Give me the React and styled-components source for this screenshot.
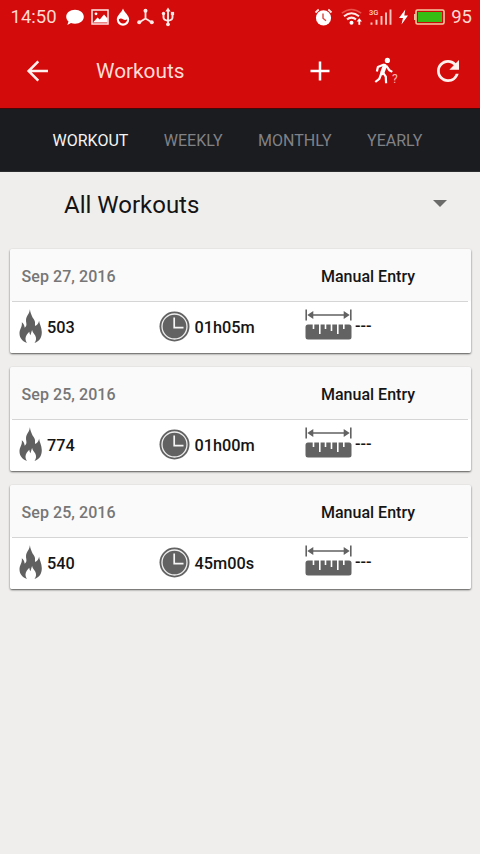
import React from "react";
import styled, { createGlobalStyle } from "styled-components";

const GlobalStyle = createGlobalStyle`
  * { box-sizing: border-box; }
  body {
    margin: 0;
    background: #efeeec;
    font-family: Roboto, "Liberation Sans", sans-serif;
  }
  svg { display: block; flex: none; }
`;

const Screen = styled.div`
  width: 480px;
  height: 854px;
  background: #efeeec;
  overflow: hidden;
`;

const Header = styled.header`
  height: 108px;
  background: #d40b0b;
  color: #ffe9e6;
`;

const StatusBar = styled.div`
  display: flex;
  justify-content: space-between;
  align-items: center;
  height: 34px;
  padding: 0 8px 0 10.5px;
`;

const StatusGroup = styled.div`
  display: flex;
  align-items: center;
  gap: ${props => props.$gap}px;
`;

const StatusText = styled.span`
  font-size: 18.5px;
  line-height: 34px;
  color: #ffd9d3;
`;

const Clock = styled(StatusText)`
  margin-right: 2px;
`;

const Toolbar = styled.div`
  display: flex;
  align-items: center;
  height: 74px;
  padding: 0 21px 0 26px;
`;

const Title = styled.h1`
  flex: 1;
  margin: 0 0 0 48px;
  font-size: 20.8px;
  line-height: 26px;
  font-weight: 400;
  color: #ffdcd6;
`;

const Actions = styled.div`
  display: flex;
  align-items: center;
  gap: 36px;

  svg:first-child { margin-right: 7px; }
`;

const TabBar = styled.nav`
  display: flex;
  justify-content: center;
  gap: 35.5px;
  height: 64px;
  padding-right: 5px;
  border-top: 1px solid #4c0507;
  border-bottom: 1px solid #2c2d2f;
  background: #1b1c20;
`;

const Tab = styled.span`
  font-size: 16px;
  line-height: 64px;
  color: ${props => (props.$active ? "#f4f4f4" : "#818286")};
`;

const Filter = styled.div`
  display: flex;
  align-items: center;
  justify-content: space-between;
  height: 66px;
  margin-bottom: 1px;
  padding: 0 33.5px 0 64px;
  font-size: 24px;
  color: #141414;
`;

const Arrow = styled.span`
  border: 6.5px solid transparent;
  border-width: 7px 7px 0;
  border-top-color: #6b6b6a;
  margin-bottom: 3px;
`;

const List = styled.div`
  display: flex;
  flex-direction: column;
  gap: 14px;
  padding: 10px 9.5px 0;
`;

const Card = styled.div`
  height: 104px;
  padding: 0 2.5px 0 2px;
  border-radius: 2px;
  background: linear-gradient(#fafafa 52px, #fff 52px);
  box-shadow: 0 1px 2px rgba(0, 0, 0, 0.65);
`;

const CardHead = styled.div`
  display: flex;
  height: 53px;
  border-bottom: 1px solid #d5d5d5;
  font-size: 16px;
  font-weight: 500;
  line-height: 55px;
`;

const CardDate = styled.span`
  width: 300px;
  padding-left: 10px;
  letter-spacing: 0.07px;
  color: #767676;
`;

const CardType = styled.span`
  padding-left: 9.5px;
  color: #151515;
`;

const CardBody = styled.div`
  display: grid;
  grid-template-columns: 140px 145.5px 1fr;
  height: 51px;
  padding-left: 7.5px;
`;

const Stat = styled.div`
  display: flex;
  align-items: center;
  gap: ${props => props.$gap}px;
  padding-bottom: ${props => props.$lift || 0}px;
  font-size: 16.3px;
  font-weight: 500;
  color: #151515;
`;

const StatIcon = styled.span`
  margin-bottom: ${props => props.$lift}px;
`;

const StatValue = styled.span`
  line-height: 20px;
`;

const ChatIcon = () => (
  <svg width="18" height="17" viewBox="0 0 18 17">
    <path d="M9 .8c5 0 8.800 3 8.800 7s-3.800 7-8.800 7c-1.500 0-2.800-.2-4-.7L1.300 16l1.200-3.500C1 11.200.2 9.600.2 7.800c0-4 3.800-7 8.800-7z" fill="#fff" />
  </svg>
);

const PictureIcon = () => (
  <svg width="18" height="16" viewBox="0 0 18 16">
    <rect x="1" y="1" width="16" height="14" fill="none" stroke="#ffe9e6" strokeWidth="1.500" />
    <path d="M2 13.500l4.500-5 2.300 2 4.200-5 3.500 4v4z" fill="#fff" />
    <circle cx="5" cy="4.800" r="1.400" fill="#fff" />
  </svg>
);

const DropIcon = () => (
  <svg width="14" height="18" viewBox="0 0 14 18">
    <path d="M7 .500C8 4 13.200 7.500 13.200 11.500a6.200 6.200 0 0 1-12.400 0C.8 7.500 6 4 7 .5z" fill="#fff" />
    <path d="M2.800 11.300q2.200-1.500 4.200 0t4.200 0a4.200 4.200 0 0 1-8.400 0z" fill="#d40b0b" />
  </svg>
);

const NodesIcon = () => (
  <svg width="17" height="18" viewBox="0.500 0 17 18">
    <path d="M9 3v7.500M9 10.500l-6.500 4M9 10.500l6.500 4" stroke="#ffe9e6" strokeWidth="1.800" fill="none" />
    <circle cx="9" cy="2.800" r="2" fill="#ffe9e6" />
    <circle cx="2.700" cy="14.300" r="2" fill="#ffe9e6" />
    <circle cx="15.300" cy="14.300" r="2" fill="#ffe9e6" />
  </svg>
);

const UsbIcon = () => (
  <svg width="14" height="20" viewBox="0 0 14 20">
    <path d="M7 3v14M2.500 7v3.500q0 2.500 4.500 3.300M11.500 7v3.500q0 2.500-4.500 3.300" stroke="#ffe9e6" strokeWidth="1.900" fill="none" />
    <path d="M4.400 4.500L7 .5l2.600 4z" fill="#ffe9e6" />
    <circle cx="2.500" cy="6.500" r="1.700" fill="#ffe9e6" />
    <path d="M9.900 4.900h3.200v3.200H9.900z" fill="#ffe9e6" />
    <circle cx="7" cy="17.300" r="1.900" fill="#ffe9e6" />
  </svg>
);

const AlarmIcon = () => (
  <svg width="20" height="18" viewBox="0.500 0 20 18">
    <circle cx="9" cy="9.800" r="7.600" fill="#fff" />
    <path d="M1 4.500L4.200 1.500M17 4.500L13.800 1.500" stroke="#ffe9e6" strokeWidth="1.800" />
    <path d="M8.500 5.500v4.700l3 2.500" stroke="#d8453f" strokeWidth="1.400" fill="none" />
  </svg>
);

const WifiIcon = () => (
  <svg width="22" height="18" viewBox="0 0 22 18" fill="none">
    <path d="M.8 5.200q9.700-7.500 19.400 0" stroke="#e8524a" strokeWidth="1.500" />
    <path d="M3 8.200q7.500-6 15 0M6 11.400q4.500-3.500 9 0" stroke="#ffe9e6" strokeWidth="2" />
    <circle cx="10.500" cy="14.800" r="2" fill="#fff" />
    <path d="M18.300 16.800v-4" stroke="#fff" strokeWidth="1.800" />
    <path d="M15.600 13.500l2.700-3.300 2.700 3.300z" fill="#fff" />
  </svg>
);

const SignalIcon = () => (
  <svg width="23" height="18" viewBox="0 0 23 18">
    <path d="M2.500 14.500v2.300M7.500 11.800v5M12.500 8v8.800M17 4.500v12.300M21.500 1.500v15.300" stroke="#ffc4bd" strokeWidth="1.900" />
    <text x="0" y="7" fontSize="7.500" fontWeight="500" fill="#ffd0ca">3G</text>
  </svg>
);

const BoltIcon = () => (
  <svg width="10" height="16" viewBox="-1 0 10 16">
    <path d="M6.300.500L0 9h4L2.500 15.500 9 6.500H5.300z" fill="#fff" />
  </svg>
);

const BatteryIcon = () => (
  <svg width="31" height="16" viewBox="0 0 31 16">
    <rect x="2" y="1" width="28" height="14" rx="1.500" fill="#c70a05" stroke="#f6c9a4" strokeWidth="1.600" />
    <path d="M.8 5v6" stroke="#f6c9a4" strokeWidth="1.500" />
    <rect x="4" y="3" width="24" height="10" fill="#35bd14" />
  </svg>
);

const BackIcon = () => (
  <svg width="22" height="22" viewBox="0 0 22 22">
    <path d="M22 11H3M12.300 1.300L2.600 11l9.700 9.700" stroke="#fff0ee" strokeWidth="2.500" fill="none" />
  </svg>
);

const PlusIcon = () => (
  <svg width="20" height="20" viewBox="0 0 20 20">
    <path d="M10 .500v19M.5 10h19" stroke="#fff" strokeWidth="2.500" />
  </svg>
);

const WalkIcon = () => (
  <svg width="28" height="30" viewBox="0 -1 28 30">
    <circle cx="14.400" cy="3.400" r="2.600" fill="#fff" />
    <path d="M11.800 9L9.200 16" stroke="#fff" strokeWidth="4.200" strokeLinecap="round" />
    <path d="M11 7.600L4.900 10l-1 4.400M13.400 8.800l2.900 4.400 3 1.700M10.300 16l2.500 3.700.3 6.500M8.300 16.500l-2 5.300-4 3.200" stroke="#fff" strokeWidth="2.200" fill="none" strokeLinejoin="round" />
    <text x="19" y="26" fontSize="12" fill="#ffb5ad">?</text>
  </svg>
);

const RefreshIcon = () => (
  <svg width="22" height="22" viewBox="4 4 16 16">
    <path d="M17.650 6.350A7.958 7.958 0 0 0 12 4c-4.420 0-7.990 3.580-7.990 8s3.570 8 7.990 8c3.730 0 6.840-2.550 7.730-6h-2.080A5.990 5.990 0 0 1 12 18c-3.310 0-6-2.690-6-6s2.690-6 6-6c1.660 0 3.140.69 4.220 1.780L13 11h7V4l-2.350 2.350z" fill="#fff0ee" />
  </svg>
);

const FlameIcon = () => (
  <svg width="23" height="35" viewBox="0 0 23 35">
    <path d="M10.900.200C11.300 3.500 12.300 5 13 7.300c.7 2 2.800 3.700 3 5.700.1 1.500-.2 2.700.2 4 1.700-.5 3.200-2.300 3.900-5.200.3 3 2.600 6.700 2.700 11.200.1 5.500-2.300 9.300-7.300 11 2-2.700 1.900-5 .7-7.500-1-2-2.600-2.900-3.100-5.500-.8 1.500-.8 3.300-1.700 5.200-.7-1.200-1.100-2.200-1.100-3.500-1.900 1.700-3.600 4-3.800 6.500-.1 1.800.5 3.300 1.600 4.700C3.300 32.500.6 29 .5 24.500c-.1-4.500 3-6.500 2.300-11.300 1.700 1.300 2.600 3 2.900 5.600 1.500-1.400 2-2.700 1.600-4.800-.4-2.200-.5-4.200.5-6.300C9 5.500 10.600 3.500 10.900.2z" fill="#606060" />
  </svg>
);

const ClockIcon = () => (
  <svg width="31" height="31" viewBox="0 0 31 31">
    <circle cx="15.500" cy="15.500" r="15" fill="#626262" />
    <circle cx="15.500" cy="15.500" r="12.500" fill="none" stroke="#efefef" strokeWidth="1.300" />
    <path d="M15.200 6.500v10.200h9.300" stroke="#f5f5f5" strokeWidth="1.700" fill="none" />
  </svg>
);

const RulerIcon = () => (
  <svg width="47" height="31" viewBox="0 0 47 31">
    <path d="M1.200.500v11M45.800.5v11M4 6h39" stroke="#626262" strokeWidth="1.600" />
    <path d="M2.300 6l6-4v8zM44.700 6l-6-4v8z" fill="#626262" />
    <rect x=".5" y="15.500" width="46" height="15" rx="2.500" fill="#626262" />
    <path d="M8.500 15v5M14.800 15v10M20.500 15v5M26.500 15v7M32.800 15v10M38.800 15v5" stroke="#fff" strokeWidth="1.600" />
  </svg>
);

const tabs = ["WORKOUT", "WEEKLY", "MONTHLY", "YEARLY"];

const workouts = [
  { id: 1, date: "Sep 27, 2016", calories: "503", time: "01h05m" },
  { id: 2, date: "Sep 25, 2016", calories: "774", time: "01h00m" },
  { id: 3, date: "Sep 25, 2016", calories: "540", time: "45m00s" }
];

const Workout = ({ workout }) => (
  <Card>
    <CardHead>
      <CardDate>{workout.date}</CardDate>
      <CardType>Manual Entry</CardType>
    </CardHead>
    <CardBody>
      <Stat $gap={5}>
        <StatIcon $lift={2}>
          <FlameIcon />
        </StatIcon>
        <StatValue>{workout.calories}</StatValue>
      </Stat>
      <Stat $gap={4.5}>
        <StatIcon $lift={3}>
          <ClockIcon />
        </StatIcon>
        <StatValue>{workout.time}</StatValue>
      </Stat>
      <Stat $gap={3.5} $lift={4}>
        <StatIcon $lift={2}>
          <RulerIcon />
        </StatIcon>
        <StatValue>---</StatValue>
      </Stat>
    </CardBody>
  </Card>
);

export default function App() {
  return (
    <Screen>
      <GlobalStyle />
      <Header>
        <StatusBar>
          <StatusGroup $gap={7}>
            <Clock>14:50</Clock>
            <ChatIcon />
            <PictureIcon />
            <DropIcon />
            <NodesIcon />
            <UsbIcon />
          </StatusGroup>
          <StatusGroup $gap={6}>
            <AlarmIcon />
            <WifiIcon />
            <SignalIcon />
            <BoltIcon />
            <BatteryIcon />
            <StatusText>95</StatusText>
          </StatusGroup>
        </StatusBar>
        <Toolbar>
          <BackIcon />
          <Title>Workouts</Title>
          <Actions>
            <PlusIcon />
            <WalkIcon />
            <RefreshIcon />
          </Actions>
        </Toolbar>
      </Header>
      <TabBar>
        {tabs.map((tab, i) => (
          <Tab key={tab} $active={i === 0}>{tab}</Tab>
        ))}
      </TabBar>
      <Filter>
        All Workouts
        <Arrow />
      </Filter>
      <List>
        {workouts.map(workout => (
          <Workout key={workout.id} workout={workout} />
        ))}
      </List>
    </Screen>
  );
}
